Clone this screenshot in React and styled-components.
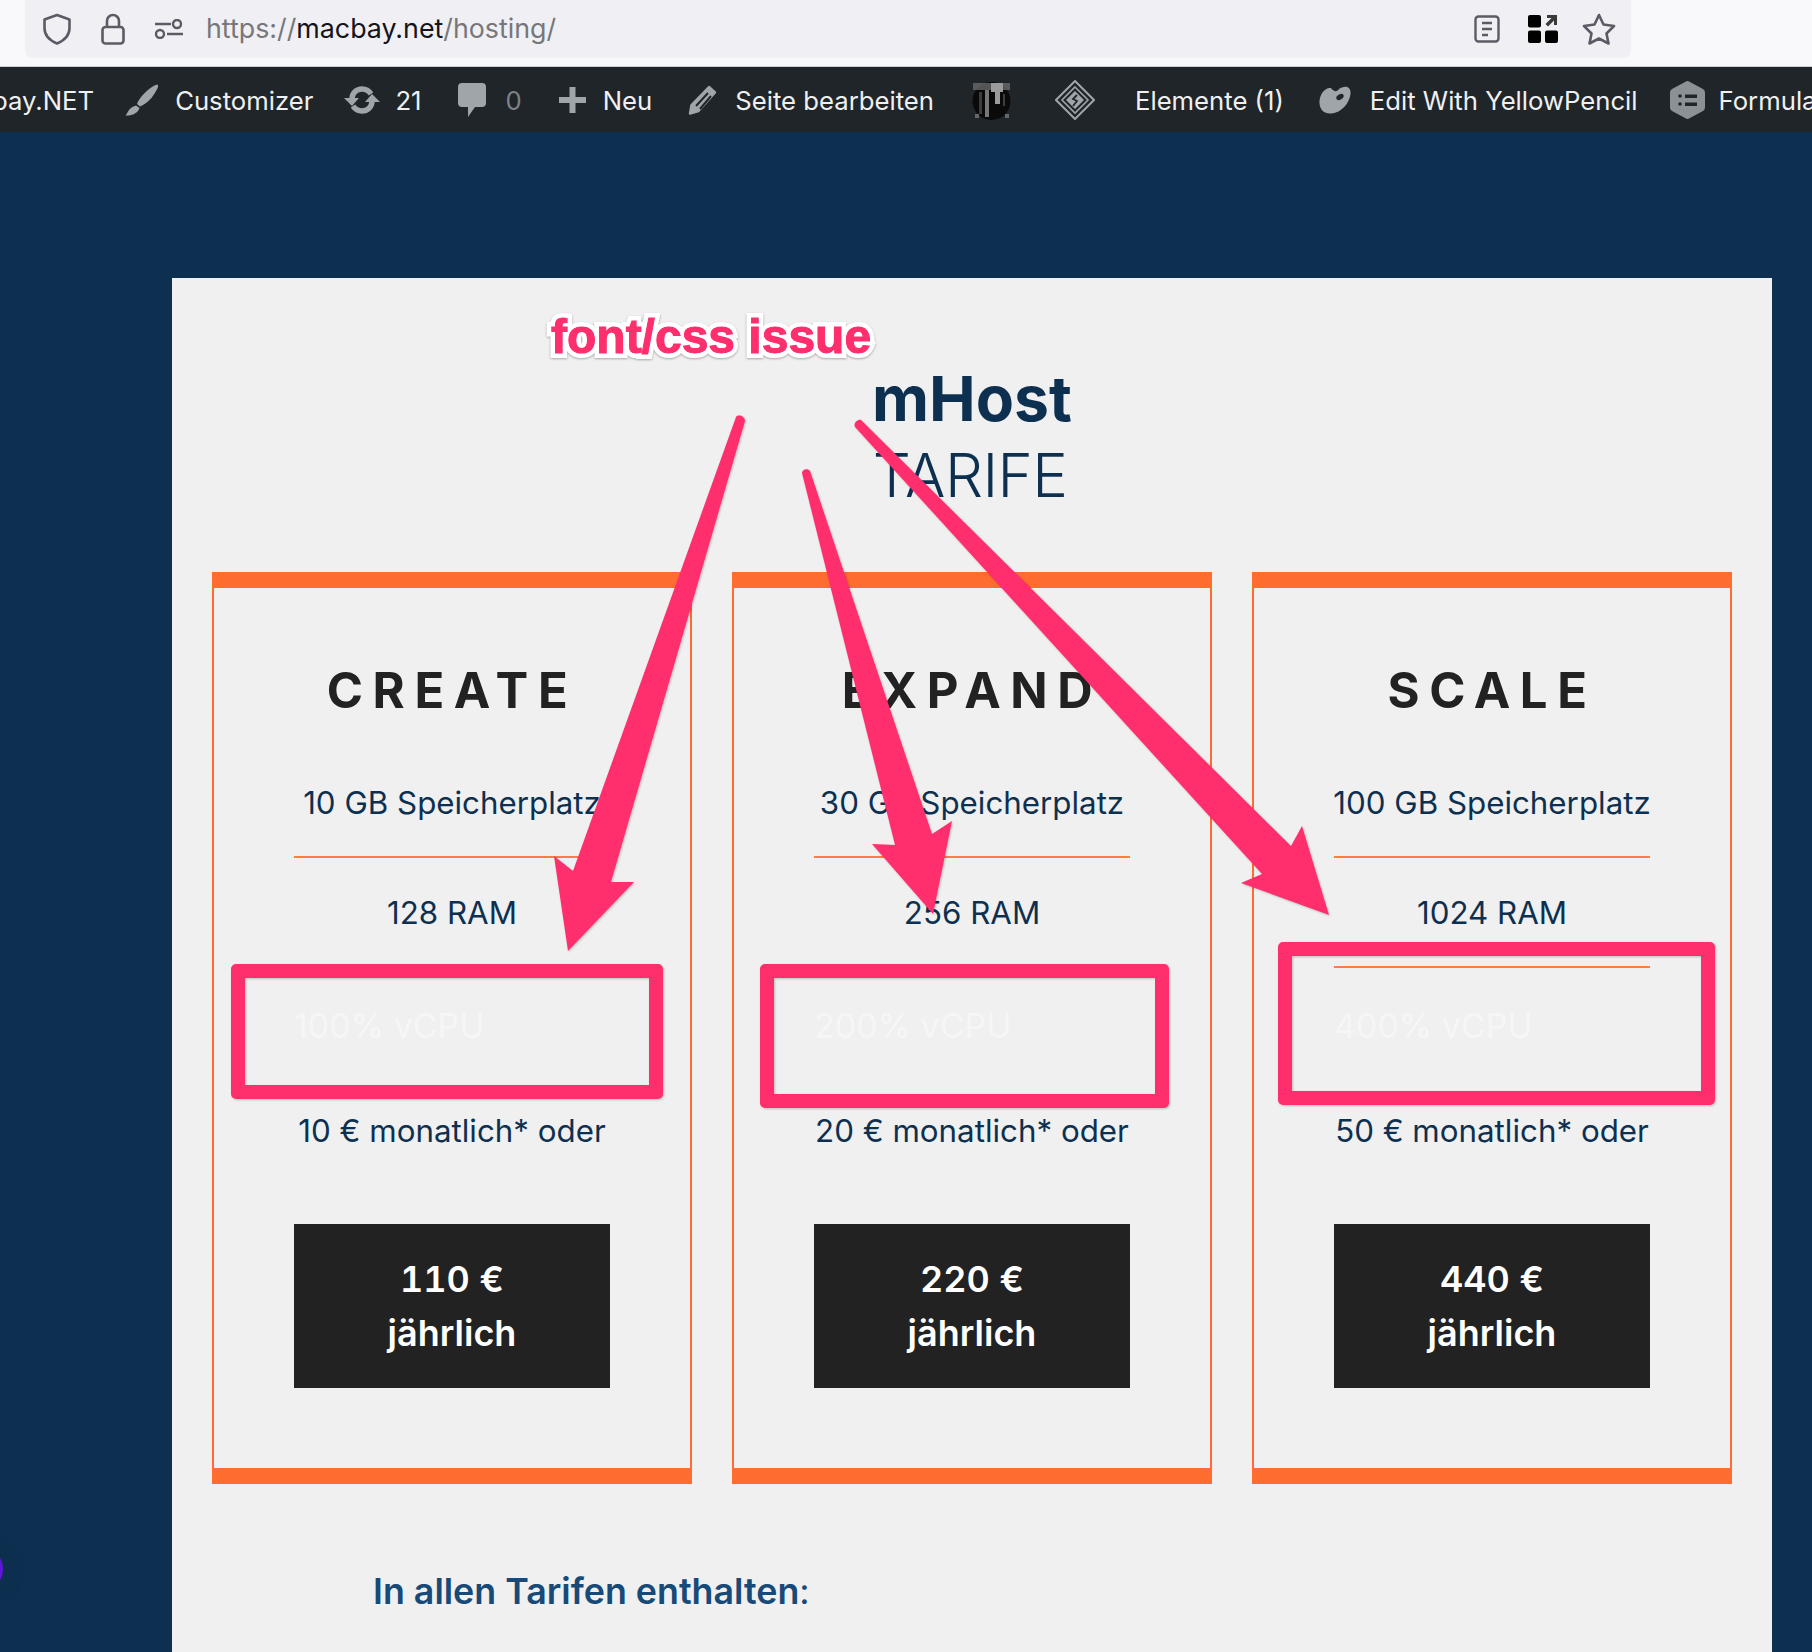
import React from 'react';
import styled, { createGlobalStyle } from 'styled-components';

const PINK = '#ff2f6e';
const NAVY = '#0e3050';
const ORANGE = '#ff6c2f';

const GlobalStyle = createGlobalStyle`
  html, body {
    margin: 0;
    padding: 0;
    background: ${NAVY};
  }
  body {
    font-family: Inter, "Liberation Sans", sans-serif;
    overflow: hidden;
  }
`;

const Shot = styled.div`
  position: relative;
  width: 1812px;
  height: 1652px;
  overflow: hidden;
`;

const BrowserBar = styled.div`
  height: 66px;
  background: #f9f9fb;
  border-bottom: 1px solid #cfcfd0;
  padding-left: 25px;
`;

const UrlBar = styled.div`
  width: 1606px;
  height: 58px;
  background: #f0f0f4;
  border-radius: 0 0 8px 8px;
  display: flex;
  align-items: center;
  padding: 0 15px 0 17px;
  box-sizing: border-box;
`;

const UrlIcons = styled.div`
  display: flex;
  align-items: center;
  gap: 29px;
  margin-right: 22px;
`;

const UrlActions = styled.div`
  display: flex;
  align-items: center;
  gap: 26px;
  svg:nth-child(2) {
    margin: 0 -2px 0 2px;
  }
`;

const UrlText = styled.div`
  font-size: 26.8px;
  color: #77777b;
  flex: 1;
  line-height: 54px;
  padding-bottom: 3px;
  strong {
    font-weight: 400;
    color: #15141a;
  }
`;

const AdminBar = styled.div`
  height: 65px;
  background: #1f2529;
  display: flex;
  align-items: center;
  gap: 33px;
  padding-top: 1px;
  box-sizing: border-box;
  white-space: nowrap;
`;

const AdminItem = styled.div`
  display: flex;
  align-items: center;
  gap: ${(p) => p.$gap || 16}px;
  margin-left: ${(p) => p.$push || 0}px;
  font-size: 25.7px;
  color: #eff0f1;
  svg {
    flex: none;
    display: block;
  }
`;

const Dim = styled.span`
  color: #7d8286;
`;

const Page = styled.div`
  height: 1520px;
  background: ${NAVY};
  padding: 146px 40px 0 172px;
  box-sizing: border-box;
`;

const Panel = styled.div`
  width: 1600px;
  height: 1400px;
  background: #f0f0f0;
  padding: 81px 40px 0;
  box-sizing: border-box;
`;

const Heading = styled.h1`
  margin: 0;
  font-size: 62.5px;
  line-height: 78px;
  text-align: center;
  color: ${NAVY};
  font-weight: 650;
`;

const SubHeading = styled.h2`
  margin: 0;
  padding-right: 4px;
  font-size: 60px;
  line-height: 76px;
  letter-spacing: -0.6px;
  text-align: center;
  color: ${NAVY};
  font-weight: 300;
`;

const Cards = styled.div`
  display: grid;
  grid-template-columns: repeat(3, 480px);
  gap: 40px;
  margin-top: 59px;
`;

const Card = styled.div`
  height: 912px;
  box-sizing: border-box;
  border: 2px solid ${ORANGE};
  border-top-width: 16px;
  border-bottom-width: 16px;
  padding-top: 73px;
  display: flex;
  flex-direction: column;
  align-items: center;
`;

const PlanName = styled.div`
  font-size: 49px;
  line-height: 60px;
  font-weight: 700;
  letter-spacing: 9.6px;
  color: #222222;
  margin-bottom: 27px;
`;

const Features = styled.ul`
  list-style: none;
  margin: 0;
  padding: 0;
  width: 316px;
`;

const Feature = styled.li`
  font-size: 31.3px;
  line-height: 40px;
  padding: 35px 0 33px;
  text-align: center;
  color: ${NAVY};
  border-bottom: 2px solid #ff7c45;
  white-space: nowrap;
  display: flex;
  justify-content: center;
`;

const FaintFeature = styled(Feature)`
  font-size: 34px;
  padding: 38px 0 30px;
  color: #f6f6f6;
  border-bottom-color: transparent;
  justify-content: flex-start;
`;

const PriceNote = styled(Feature)`
  padding: 33px 0 35px;
  border-bottom-color: transparent;
`;

const PriceButton = styled.div`
  width: 316px;
  height: 164px;
  background: #222222;
  color: #ffffff;
  font-size: 36px;
  font-weight: 600;
  line-height: 54px;
  display: flex;
  flex-direction: column;
  justify-content: center;
  text-align: center;
  margin-top: 36px;
  font-variant-numeric: tabular-nums;
`;

const Included = styled.p`
  margin: 85px 0 0 161px;
  font-size: 35.8px;
  line-height: 44px;
  font-weight: 600;
  color: #174a78;
  span {
    font-weight: 400;
  }
`;

const PurpleDot = styled.div`
  position: absolute;
  left: -19px;
  top: 1553px;
  width: 22px;
  height: 32px;
  border-radius: 50%;
  background: #5b16d8;
  box-shadow: 0 0 28px rgba(0, 0, 0, 0.12);
`;

const Markup = styled.svg`
  position: absolute;
  inset: 0;
  pointer-events: none;
  filter: drop-shadow(1px 1px 1px rgba(0, 0, 0, 0.22));
`;

const IssueLabel = styled.div`
  position: absolute;
  left: 551px;
  top: 309px;
  font-family: "Liberation Sans", Arial, sans-serif;
  font-size: 48px;
  line-height: 56px;
  font-weight: 700;
  color: ${PINK};
  -webkit-text-stroke: 10px #ffffff;
  paint-order: stroke fill;
  filter: drop-shadow(0 1px 1px rgba(0, 0, 0, 0.3));

  &::after {
    content: 'font/css issue';
    position: absolute;
    left: 0;
    top: 0;
    -webkit-text-stroke: 1px ${PINK};
  }
`;

const plans = [
  { name: 'CREATE', disk: '10 GB Speicherplatz', ram: '128 RAM', cpu: '100% vCPU', month: '10 € monatlich* oder', year: '110 €' },
  { name: 'EXPAND', disk: '30 GB Speicherplatz', ram: '256 RAM', cpu: '200% vCPU', month: '20 € monatlich* oder', year: '220 €' },
  { name: 'SCALE', disk: '100 GB Speicherplatz', ram: '1024 RAM', cpu: '400% vCPU', month: '50 € monatlich* oder', year: '440 €' },
];

const Shield = () => (
  <svg width="30" height="32" viewBox="0 0 30 32" fill="none" stroke="#5b5b66" strokeWidth="2.6">
    <path d="M15 2 L27.5 6.5 V15 C27.5 23 21 28 15 30.5 C9 28 2.5 23 2.5 15 V6.5 Z" strokeLinejoin="round" />
  </svg>
);

const Lock = () => (
  <svg width="24" height="32" viewBox="0 0 24 32" fill="none" stroke="#5b5b66" strokeWidth="2.6">
    <path d="M6 14 V8 a6 6 0 0 1 12 0 V14" />
    <rect x="1.5" y="14" width="21" height="16.5" rx="3" />
  </svg>
);

const Perms = () => (
  <svg width="30" height="20" viewBox="0 0 30 20" fill="none" stroke="#5b5b66" strokeWidth="2.4">
    <path d="M1 5 H17 M13 15 H29" />
    <circle cx="23" cy="5" r="4" />
    <circle cx="6" cy="15" r="4" />
  </svg>
);

const Reader = () => (
  <svg width="26" height="28" viewBox="0 0 26 28" fill="none" stroke="#5b5b66" strokeWidth="2.4">
    <rect x="1.5" y="1.5" width="23" height="25" rx="3" />
    <path d="M8 8 H18 M8 14 H18 M8 20 H14" />
  </svg>
);

const Extensions = () => (
  <svg width="30" height="28" viewBox="0 0 30 28" fill="#000000">
    <rect x="0" y="0" width="13" height="12.5" rx="2" />
    <rect x="0" y="15.5" width="13" height="12.5" rx="2" />
    <rect x="17" y="15.5" width="13" height="12.5" rx="2" />
    <path d="M19 0 H29 V10 H26 V5.5 L20 11.5 L17.5 9 L23.5 3 H19 Z" fill="#3a3a3a" />
  </svg>
);

const Star = () => (
  <svg width="34" height="32" viewBox="0 0 34 32" fill="none" stroke="#5b5b66" strokeWidth="2.6" strokeLinejoin="round">
    <path d="M17 2 L21.5 11.5 L32 13 L24.5 20.5 L26.5 30.5 L17 25.5 L7.5 30.5 L9.5 20.5 L2 13 L12.5 11.5 Z" />
  </svg>
);

const Brush = () => (
  <svg width="34" height="32" viewBox="0 0 34 32" fill="#a0a5aa">
    <path d="M32 0.5 C34 1 33 4 31 7 C28 13 22 20 15 22.5 L12 20 C14 14 24 3 32 0.5 Z" />
    <path d="M11 21.5 L14.5 24 C13 29 7 32 0.5 31.5 C3 29 3 24 11 21.5 Z" />
  </svg>
);

const Refresh = () => (
  <svg width="36" height="28" viewBox="0 0 36 28" fill="none" stroke="#a0a5aa" strokeWidth="5.5">
    <path d="M8 13 C8 7 12.5 3 18 3 C22 3 25 5 27 8" />
    <path d="M28 15 C28 21 23.5 25 18 25 C14 25 11 23 9 20" />
    <path d="M0 12 L8 20 L15 12 Z M21 16 L28 8 L36 16 Z" fill="#a0a5aa" stroke="none" />
  </svg>
);

const Comment = () => (
  <svg width="28" height="34" viewBox="0 0 28 34" fill="#a0a5aa">
    <path d="M4 0 H24 a4 4 0 0 1 4 4 V20 a4 4 0 0 1 -4 4 H17 L10 34 V24 H4 a4 4 0 0 1 -4 -4 V4 a4 4 0 0 1 4 -4 Z" />
  </svg>
);

const Plus = () => (
  <svg width="27" height="26" viewBox="0 0 27 26" fill="#a0a5aa">
    <path d="M10.5 0 H16.5 V10 H27 V16 H16.5 V26 H10.5 V16 H0 V10 H10.5 Z" />
  </svg>
);

const Pencil = () => (
  <svg width="29" height="30" viewBox="0 0 29 30" fill="none" stroke="#a0a5aa" strokeWidth="2.4" strokeLinejoin="round">
    <path d="M21 2 L27 7.5 L10.5 26 L2 28.5 L3.5 20 Z" fill="#a0a5aa" />
    <path d="M8 21 L20 8 M12 24 L23 11" stroke="#1f2529" strokeWidth="2" />
  </svg>
);

const Avatar = () => (
  <svg width="39" height="40" viewBox="0 0 39 40">
    <circle cx="19.5" cy="21" r="19" fill="#0a0a0a" />
    <rect x="1" y="3" width="37" height="7" fill="#6e6e6e" opacity="0.75" />
    <path d="M19 3 h12 v9 h-3 v12 h-5 v-12 h-4 Z" fill="#9b9b9b" />
    <path d="M13 10 h4 v27 h-4 Z" fill="#777777" />
    <path d="M7 12 h3 v22 h-3 Z M31 14 h2 v12 h-2 Z" fill="#3d3d3d" />
    <path d="M3 34 h4 v4 h-4 Z M33 34 h4 v4 h-4 Z" fill="#666666" />
  </svg>
);

const Diamond = () => (
  <svg width="40" height="40" viewBox="0 0 40 40" fill="none" stroke="#a0a5aa">
    <path d="M20 1 L39 20 L20 39 L1 20 Z" strokeWidth="2" />
    <path d="M20 7 L33 20 L20 33 L7 20 Z" strokeWidth="1.6" />
    <path d="M20 11 L29 20 L20 29 L11 20 Z" fill="#a0a5aa" stroke="none" />
    <path d="M22 15 L18 19 L22 21 L18 26" stroke="#1f2529" strokeWidth="1.8" />
  </svg>
);

const Palette = () => (
  <svg width="32" height="28" viewBox="0 0 32 28" fill="#a0a5aa">
    <path d="M12 2 C15 6 18 6 20 3 C24 0 31 -1 31.5 6 C32 14 24 27 12 27.5 C3 28 0 21 0.5 15 C1 8 6 1 12 2 Z" />
    <ellipse cx="21" cy="11" rx="4" ry="2.5" transform="rotate(-30 21 11)" fill="#1f2529" />
  </svg>
);

const FormHex = () => (
  <svg width="35" height="38" viewBox="0 0 35 38" fill="#8c9196">
    <path d="M15.5 0.7 a4 4 0 0 1 4 0 L33 8 a4 4 0 0 1 2 3.5 V26.5 a4 4 0 0 1 -2 3.5 L19.5 37.3 a4 4 0 0 1 -4 0 L2 30 a4 4 0 0 1 -2 -3.5 V11.5 a4 4 0 0 1 2 -3.5 Z" />
    <circle cx="10" cy="15" r="1.8" fill="#1f2529" />
    <circle cx="10" cy="23" r="1.8" fill="#1f2529" />
    <path d="M15 13.5 H27 V17 H15 Z M15 21.5 H27 V25 H15 Z" fill="#1f2529" />
  </svg>
);

const App = () => (
  <Shot>
    <GlobalStyle />
    <BrowserBar>
      <UrlBar>
        <UrlIcons>
          <Shield />
          <Lock />
          <Perms />
        </UrlIcons>
        <UrlText>
          https://<strong>macbay.net</strong>/hosting/
        </UrlText>
        <UrlActions>
          <Reader />
          <Extensions />
          <Star />
        </UrlActions>
      </UrlBar>
    </BrowserBar>
    <AdminBar>
      <AdminItem $push={-8}>bay.NET</AdminItem>
      <AdminItem $push={-2}><Brush />Customizer</AdminItem>
      <AdminItem $push={-2} $gap={15}><Refresh />21</AdminItem>
      <AdminItem $push={3} $gap={20}><Comment /><Dim>0</Dim></AdminItem>
      <AdminItem $push={4} $gap={17}><Plus />Neu</AdminItem>
      <AdminItem $push={3} $gap={18}><Pencil />Seite bearbeiten</AdminItem>
      <AdminItem $push={5}><Avatar /></AdminItem>
      <AdminItem $push={11}><Diamond /></AdminItem>
      <AdminItem $push={7}>Elemente (1)</AdminItem>
      <AdminItem $push={2} $gap={19}><Palette />Edit With YellowPencil</AdminItem>
      <AdminItem $push={-1} $gap={14}><FormHex />Formular</AdminItem>
    </AdminBar>
    <Page>
      <Panel>
        <Heading>mHost</Heading>
        <SubHeading>TARIFE</SubHeading>
        <Cards>
          {plans.map((plan) => (
            <Card key={plan.name}>
              <PlanName>{plan.name}</PlanName>
              <Features>
                <Feature>{plan.disk}</Feature>
                <Feature>{plan.ram}</Feature>
                <FaintFeature>{plan.cpu}</FaintFeature>
                <PriceNote>{plan.month}</PriceNote>
              </Features>
              <PriceButton>
                <span>{plan.year}</span>
                <span>jährlich</span>
              </PriceButton>
            </Card>
          ))}
        </Cards>
        <Included>In allen Tarifen enthalten<span>:</span></Included>
      </Panel>
    </Page>
    <PurpleDot />
    <Markup width="1812" height="1652" viewBox="0 0 1812 1652" fill={PINK}>
      <path d="M736 417 C738 414 745 416 745 421 L611 882 L634 882 L568 951 L554 856 L573 871 Z" />
      <path d="M802 473 C802 469 808 468 810 471 L932 834 L952 821 L933 914 L872 844 L895 845 Z" />
      <path d="M855 427 C853 423 858 419 861 420 L1291 846 L1302 826 L1329 915 L1241 883 L1262 874 Z" />
      <path fillRule="evenodd" d="M236 964 H658 a5 5 0 0 1 5 5 V1094 a5 5 0 0 1 -5 5 H236 a5 5 0 0 1 -5 -5 V969 a5 5 0 0 1 5 -5 Z M245 978 V1085 H649 V978 Z" />
      <path fillRule="evenodd" d="M765 964 H1164 a5 5 0 0 1 5 5 V1103 a5 5 0 0 1 -5 5 H765 a5 5 0 0 1 -5 -5 V969 a5 5 0 0 1 5 -5 Z M774 978 V1094 H1155 V978 Z" />
      <path fillRule="evenodd" d="M1283 942 H1710 a5 5 0 0 1 5 5 V1100 a5 5 0 0 1 -5 5 H1283 a5 5 0 0 1 -5 -5 V947 a5 5 0 0 1 5 -5 Z M1292 956 V1091 H1701 V956 Z" />
    </Markup>
    <IssueLabel>font/css issue</IssueLabel>
  </Shot>
);

export default App;
